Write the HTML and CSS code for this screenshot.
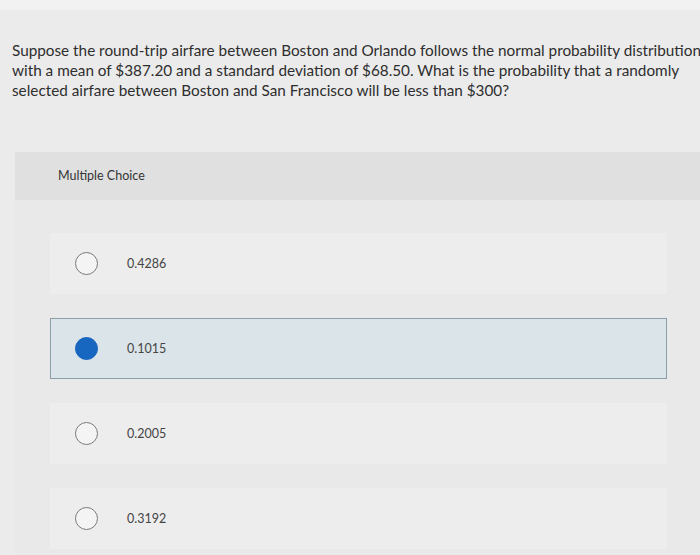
FILE: index.html
```html
<!DOCTYPE html>
<html lang="en">
<head>
    <meta charset="UTF-8">
    <title>Question</title>
    <link rel="stylesheet" href="styles.css">
</head>
<body>
    <div class="topbar"></div>
    <div class="question">
        <div class="line">Suppose the round-trip airfare between Boston and Orlando follows the normal probability distribution</div>
        <div class="line">with a mean of $387.20 and a standard deviation of $68.50. What is the probability that a randomly</div>
        <div class="line">selected airfare between Boston and San Francisco will be less than $300?</div>
    </div>
    <div class="mc">
        <div class="mc-head">Multiple Choice</div>
        <div class="choices">
            <div class="choice"><span class="radio"></span><span class="label">0.4286</span></div>
            <div class="choice selected"><span class="radio"></span><span class="label">0.1015</span></div>
            <div class="choice"><span class="radio"></span><span class="label">0.2005</span></div>
            <div class="choice"><span class="radio"></span><span class="label">0.3192</span></div>
        </div>
    </div>
</body>
</html>
```

FILE: styles.css
```css
body {
    margin: 0;
    background: #ebebeb;
    font-family: Lato, 'Open Sans', sans-serif;
    overflow: hidden;
}
.topbar {
    height: 10px;
    background: #f2f2f2;
}
.question {
    padding: 30px 0 0 12px;
    font-size: 15.3px;
    line-height: 20px;
    color: #2e2e2e;
}
.line {
    white-space: nowrap;
}
.mc {
    margin: 52px 0 0 15px;
}
.mc-head {
    height: 48px;
    line-height: 48px;
    padding-left: 43px;
    background: #e0e0e0;
    font-size: 12.5px;
    color: #333;
}
.choices {
    display: flex;
    flex-direction: column;
    gap: 24px;
    padding: 33px 33px 10px 35px;
    background: #e9e9e9;
}
.choice {
    display: flex;
    align-items: center;
    gap: 29px;
    height: 61px;
    padding-left: 24px;
    background: #ededed;
    border: 1px solid transparent;
    box-sizing: border-box;
}
.choice.selected {
    background: #dbe4e8;
    border-color: #8c9ea8;
}
.radio {
    width: 21px;
    height: 21px;
    border-radius: 50%;
    border: 1.5px solid #7a7a7a;
    background: #f4f4f4;
}
.choice.selected .radio {
    border-color: #1766c0;
    background: #1766c0;
}
.label {
    font-size: 12.5px;
    color: #444;
}
```
